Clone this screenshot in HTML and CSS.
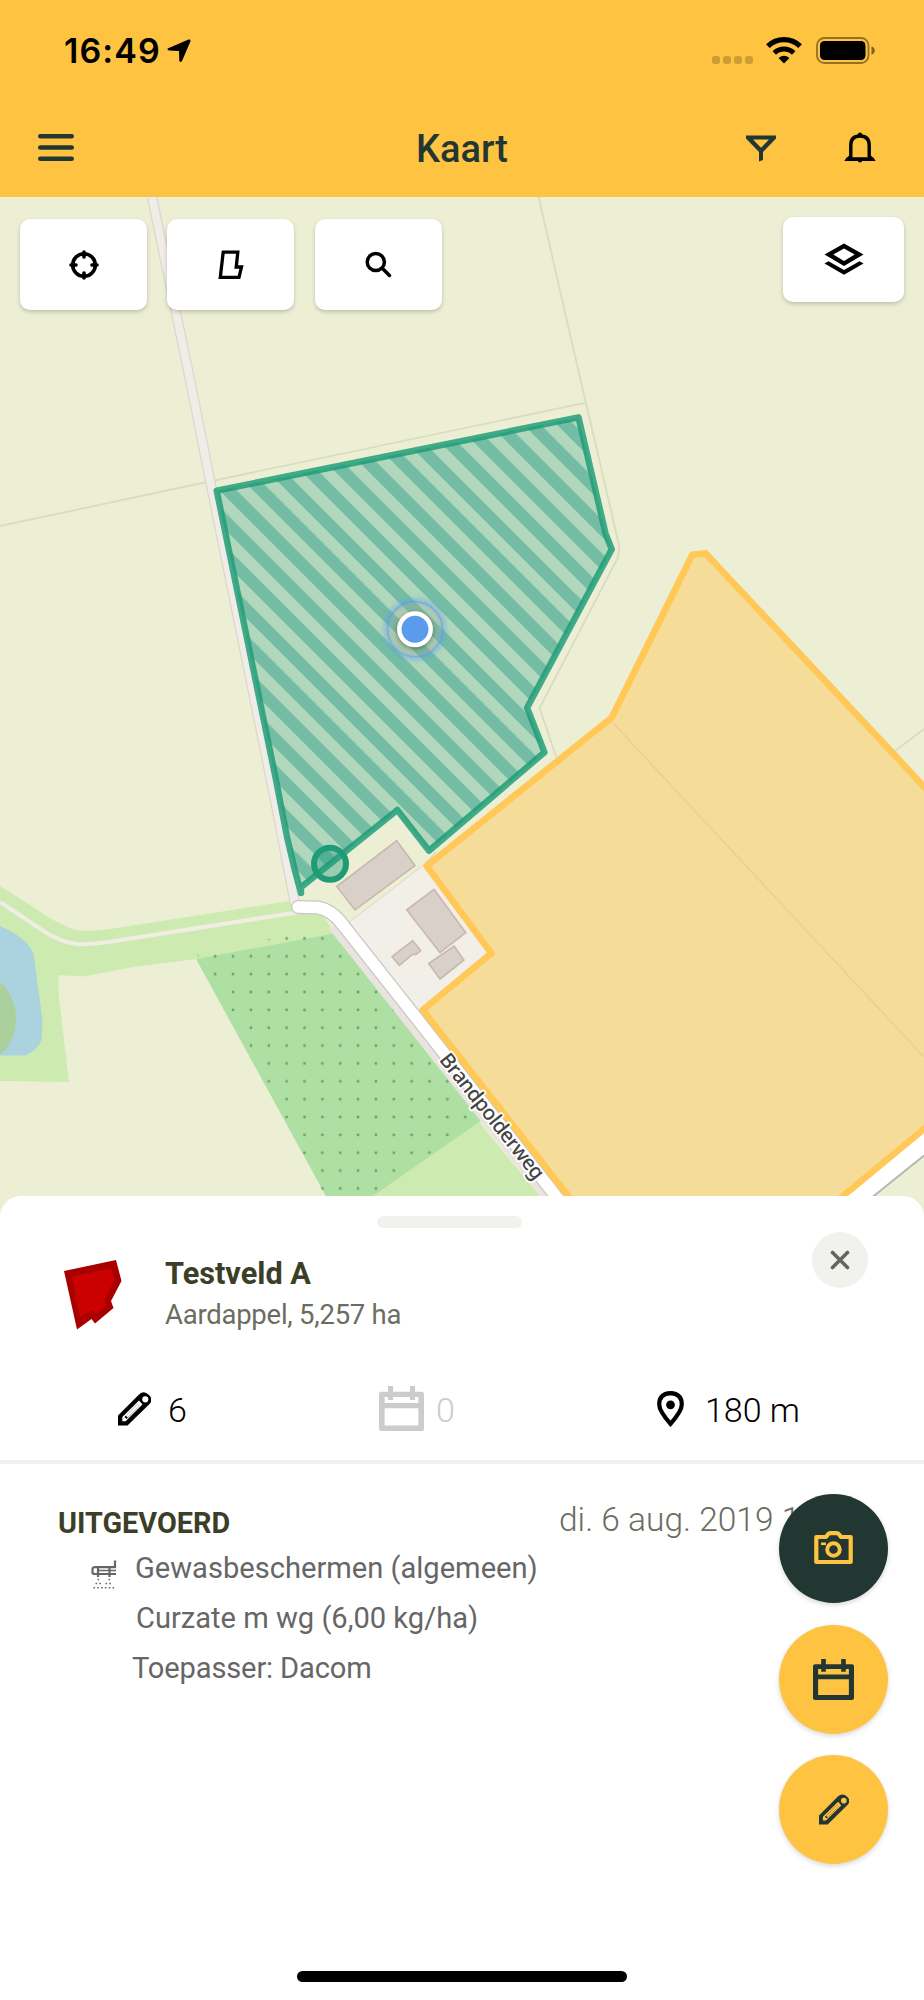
FILE: index.html
```html
<!DOCTYPE html>
<html lang="nl">
<head>
    <meta charset="UTF-8">
    <title>Kaart</title>
    <link rel="stylesheet" href="styles.css">
</head>
<body>
    <header>
        <div class="status-bar">
            <span class="time">16:49</span>
            <svg class="location" width="24" height="24" viewBox="0 0 24 24"><path d="M1.2 9.2 L21.5 .6 Q24 0 23.4 2.6 L15 22 Q13.2 24.4 12.3 21.5 L12 12 L2 11.4 Q-.8 10.6 1.2 9.2Z"/></svg>
            <span class="signal"><i></i><i></i><i></i><i></i></span>
            <svg class="wifi" width="36" height="27" viewBox="0 0 36 27">
                <path d="M1.9 9.2 A23 23 0 0 1 34.1 9.2" fill="none" stroke="#000" stroke-width="5.2"/>
                <path d="M8.3 16 A14 14 0 0 1 27.7 16" fill="none" stroke="#000" stroke-width="5"/>
                <path d="M12.6 21 Q18 16.6 23.4 21 L18 26.4Z"/>
            </svg>
            <svg width="60" height="28" viewBox="0 0 60 28">
                <rect x="1" y="1" width="51.5" height="25" rx="7.5" fill="none" stroke="#000" stroke-opacity=".42" stroke-width="1.8"/>
                <rect x="4" y="4" width="45.5" height="19" rx="4.5"/>
                <path d="M55.5 9.2 Q58.8 10.5 58.8 13.5 T55.5 17.8Z" fill-opacity=".5"/>
            </svg>
        </div>
        <nav>
            <svg class="menu" width="36" height="28" viewBox="0 0 36 28"><path d="M2.3 2.3H33.7M2.3 13.5H33.7M2.3 24.7H33.7"/></svg>
            <h1>Kaart</h1>
            <svg class="filter" width="30" height="27" viewBox="0 0 30 27"><path fill-rule="evenodd" d="M0 .5H30V3.5L17 17V25L13 26.5V17L0 3.5ZM7 4.5L15 12.7L23 4.5Z"/></svg>
            <svg class="bell" width="32" height="31" viewBox="0 0 32 31">
                <path d="M6.8 26V13.3Q6.8 4 16 4T25.2 13.3V24L28 27.2H4L6.8 24" fill="none" stroke="#000" stroke-width="3.4"/>
                <path d="M13.3 3.5Q14 .4 16 .4T18.7 3.5ZM13.6 28.5H18.4Q18 30.6 16 30.6T13.6 28.5ZM.8 28.8L2.5 25.6H29.5L31.2 28.8Z"/>
            </svg>
        </nav>
    </header>

    <main class="map">
        <svg class="map-canvas" width="924" height="1023" viewBox="0 197 924 1023">
            <defs>
                <pattern id="stripes" width="23.76" height="24" patternUnits="userSpaceOnUse" patternTransform="translate(0 237.3) rotate(-45)">
                    <rect width="23.76" height="24" fill="#b1d7bc"/>
                    <rect width="12.2" height="24" fill="#75bca5"/>
                </pattern>
                <pattern id="orchard" x="188.4" y="947.4" width="17.86" height="17.86" patternUnits="userSpaceOnUse">
                    <circle cx="8.93" cy="8.93" r="1.4" fill="#6f9f69"/>
                </pattern>
                <filter id="glow" x="-50%" y="-50%" width="200%" height="200%"><feGaussianBlur stdDeviation="2.4"/></filter>
            </defs>

            <!-- grass, water and orchard -->
            <path fill="#cdebb0" d="M0 886L30 905Q60 926 77 930Q90 932 110 929L200 915L290 901L320 912L335 933L197 959L133 967L84 976.500L58.500 975L58.500 993L62 1023L69 1082L0 1081Z"/>
            <path fill="#aad3df" d="M0 926C14 932 32 943 34 957L42.500 1021L41.500 1040Q38 1050 25 1055.500H0Z"/>
            <path fill="#abd09b" d="M0 982Q16 997 16 1019Q16 1041 0 1055Z"/>
            <path fill="none" stroke="#f0ede5" stroke-width="4.200" d="M0 902L45 932Q65 944 80 944.300Q93 944.300 115 941L200 927.600L300 912"/>
            <path fill="#cdebb0" d="M470 1110L555 1220H340Z"/>
            <path fill="#aee0a3" d="M196 959L333 933.500L482 1120L339 1220L196 959Z"/>
            <path fill="#cdebb0" d="M479 1122.500L373 1196L340 1220H560Z"/>
            <path fill="url(#orchard)" d="M196 952L310 932L334 933L480 1118L373 1194L325 1196Z"/>

            <!-- parcel borders -->
            <g fill="none" stroke="#d9dcc3" stroke-width="1.800">
                <path d="M0 526L207 482L586 402.700"/>
                <path d="M538.700 197L569 330L580.600 380L586 403L619.400 546.700L617.700 558L539.600 708L556.300 757"/>
                <path d="M895 751L924 729M350 922L423 866L436 852M705 550L900 757"/>
            </g>

            <!-- unpaved road -->
            <path fill="none" stroke="#dbd8cb" stroke-width="10.500" d="M152 197L190 380L211 485L277 810L295 904"/>
            <path fill="none" stroke="#f0ece7" stroke-width="8" d="M152 197L190 380L211 485L277 810L295 904"/>

            <!-- farmyard -->
            <path fill="#f2efe9" d="M423 866L491 953L418 1010L350 922Z"/>
            <g fill="#d9d0c9" stroke="#c9b8ae" stroke-width="1.600">
                <path d="M396.700 840.700L415 865.700L355 910L336.700 886.500Z"/>
                <path d="M434 889.300L465.700 932.700L440 952.700L406.700 910Z"/>
                <path d="M412.700 940.700L420.700 950.700L416 954.500L412.500 954.500L399.300 965.300L392 956.700Z"/>
                <path d="M454 946L464 960L440 979L428.700 963.500Z"/>
            </g>

            <!-- Brandpolderweg -->
            <path fill="none" stroke="#e9e4df" stroke-width="18" d="M336 923L560 1207"/>
            <path fill="none" stroke="#c9c7c4" stroke-width="14" stroke-linecap="round" d="M298 907L318 907.500Q332 910 343 925L418 1020L566 1209"/>
            <path fill="none" stroke="#fff" stroke-width="11.500" stroke-linecap="round" d="M298 907L318 907.500Q332 910 343 925L418 1020L566 1209"/>
            <path fill="#fff" d="M924 1128V1155L874 1196L844 1220H800Z"/>
            <path fill="none" stroke="#b5b5ae" stroke-width="1.800" d="M924 1155.500L844 1220"/>

            <!-- yellow field -->
            <path fill="#f5dd99" stroke="#ffc857" stroke-width="6.600" stroke-linejoin="round" d="M692.300 554.700L705.500 553.300L960 825V1098L924 1129L820 1215L700 1310L600 1236L568.300 1196L422.700 1010L491.300 953.300L426.700 866L611.800 717.500Z"/>
            <path fill="none" stroke="#e9d292" stroke-width="1.800" d="M613 723L924 1057"/>

            <!-- selected field -->
            <path fill="url(#stripes)" d="M216.700 490.700L578.500 417.300L605.500 533.300L611.800 549.300L527.100 707.700L544.500 752.300L429 850.700L397.300 810L301 887.300V893L294 865L276 780Z"/>
            <path fill="none" stroke="#1b9b75" stroke-opacity=".82" stroke-width="6.400" stroke-linejoin="round" stroke-linecap="round" d="M301 893L301 887.300L397.300 810L429 850.700L544.500 752.300L527.100 707.700L611.800 549.300L605.500 533.300L578.500 417.300L216.700 490.700L276 780L287 837L295 871L301 893"/>
            <circle cx="330" cy="863.700" r="16" fill="#1f9b77" fill-opacity=".4" stroke="#1f9b77" stroke-width="6"/>

            <!-- own position -->
            <circle cx="415" cy="629.300" r="28.500" fill="none" stroke="#5b9bed" stroke-width="4" filter="url(#glow)" opacity=".6"/>
            <circle cx="415" cy="629.300" r="27.500" fill="#b8a98a" fill-opacity=".2" stroke="#5b9bed" stroke-opacity=".5" stroke-width="1.500"/>
            <circle cx="415" cy="631" r="18.500" fill="#24483a" opacity=".5" filter="url(#glow)"/>
            <circle cx="415" cy="629.300" r="15.700" fill="#5b9bed" stroke="#fff" stroke-width="4.500"/>

            <text class="road-name" transform="translate(438.500 1060) rotate(51.500)" textLength="155">Brandpolderweg</text>
        </svg>

        <div class="map-tools">
            <button>
                <svg width="30" height="30" viewBox="0 0 30 30" fill="none" stroke="#000" stroke-width="3.6" stroke-linecap="round"><circle cx="15" cy="15" r="11.300"/><path d="M15 2V7M15 23V28M2 15H7M23 15H28"/></svg>
            </button>
            <button>
                <svg width="26" height="30" viewBox="0 0 26 30" fill="none" stroke="#000" stroke-width="3.300"><path d="M5.200 2.200H19.800L18.200 17H23.500L21 27.300H2.300Z"/></svg>
            </button>
            <button>
                <svg width="27" height="27" viewBox="0 0 27 27" fill="none" stroke="#000" stroke-width="3.500" stroke-linecap="round"><circle cx="10.800" cy="11" r="8.600"/><path d="M17.500 17.500L24.500 24.500"/></svg>
            </button>
            <button class="layers">
                <svg width="40" height="32" viewBox="0 0 40 32"><path fill-rule="evenodd" d="M20 .4L39.500 11.500L20 23L.500 11.500ZM20 5.500L9.300 11.500L20 17.900L30.700 11.500ZM.500 20.500L4.500 18.200L20 27L35.500 18.200L39.500 20.500L20 31.700Z"/></svg>
            </button>
        </div>
    </main>

    <section class="sheet">
        <div class="handle"></div>
        <div class="field">
            <svg width="58" height="70" viewBox="0 0 58 70"><path fill="#a80000" d="M0 11L52 0L57.500 21L47 41L49.500 48L31 63.500L27.500 59L13 69.500Z"/><path fill="#cb0000" d="M8 16.500L47.500 8.300L50.500 20L40.500 40.500L42.500 45.500L31.500 54.500L28 49.500L16 57.500Z"/></svg>
            <div class="field-text">
                <h2>Testveld A</h2>
                <p>Aardappel, 5,257 ha</p>
            </div>
            <button class="close">
                <svg width="20" height="20" viewBox="0 0 20 20"><path d="M2.500 2.500L17.500 17.500M17.500 2.500L2.500 17.500"/></svg>
            </button>
        </div>
        <div class="stats">
            <div class="stat">
                <svg width="33" height="34" viewBox="0 0 33 34"><path fill-rule="evenodd" d="M0 23.500L21 2.500Q26-2 31 3T30.500 13L9.500 33.500H0ZM4.300 25V29.200H7.600L24.500 12.500L21 8.500ZM27.300 4.200A3.100 3.100 0 1 0 27.300 10.400A3.100 3.100 0 1 0 27.300 4.200Z"/><path d="M7.500 26L20.500 13" stroke="#000" stroke-width="2.800"/><path d="M8.800 24.700L20.500 13" stroke="#fff" stroke-width="2.500"/></svg>
                <span>6</span>
            </div>
            <div class="stat empty">
                <svg width="45" height="45" viewBox="0 0 40 40"><path fill-rule="evenodd" d="M2 5H8V0H12.500V5H27.500V0H32V5H38Q40 5 40 7V38Q40 40 38 40H2Q0 40 0 38V7Q0 5 2 5ZM5 9.800V15H35V9.800H32V12.500H27.500V9.800H12.500V12.500H8V9.800ZM5 19.700V35H35V19.700Z"/></svg>
                <span>0</span>
            </div>
            <div class="stat">
                <svg width="27" height="36" viewBox="0 0 27 36"><path d="M13.500 2.200Q2.200 2.800 2.200 13.500Q2.200 20 13.500 32.800Q24.800 20 24.800 13.500Q24.800 2.800 13.500 2.200Z" fill="none" stroke="#000" stroke-width="4.200"/><circle cx="13.500" cy="13.800" r="4.400"/></svg>
                <span>180 m</span>
            </div>
        </div>

        <div class="activity">
            <div class="activity-head">
                <h3>UITGEVOERD</h3>
                <time>di. 6 aug. 2019 1</time>
            </div>
            <ul>
                <li>
                    <svg width="26" height="31" viewBox="0 0 26 31" fill="none" stroke="#666"><path stroke-width="2.200" d="M4 8.200H24V1.500M4 8.200Q1.500 8.200 1.500 10V13.500Q1.500 15 4 15H25M7 8V18M18.500 8V18"/><path stroke-width="1.500" d="M7 11.500H25"/><path stroke-width="1.600" stroke-dasharray="1.600 2.200" d="M6.500 20.500H9M17.500 20.500H20M4.500 24.500H11.500M14.500 24.500H22M2.500 28.800H24"/></svg>
                    Gewasbeschermen (algemeen)
                </li>
                <li>Curzate m wg (6,00 kg/ha)</li>
                <li class="applicator">Toepasser: Dacom</li>
            </ul>
        </div>

        <div class="actions">
            <button class="camera">
                <svg width="39" height="34" viewBox="0 0 39 34" fill="none" stroke="#ffc342"><path stroke-width="4.200" stroke-linejoin="round" d="M2.300 6H12L14.500 2.800Q15.500 2.200 16.500 2.200H22.500Q23.500 2.200 24.500 2.800L27 6H36.700V31H2.300Z"/><circle cx="19.500" cy="18.500" r="6.300" stroke-width="3.900"/><path stroke-width="2.600" d="M7 12.800H12"/></svg>
            </button>
            <button class="plan">
                <svg width="41" height="41" viewBox="0 0 40 40"><path fill-rule="evenodd" d="M2 5H8V0H12.500V5H27.500V0H32V5H38Q40 5 40 7V38Q40 40 38 40H2Q0 40 0 38V7Q0 5 2 5ZM5 9.800V15H35V9.800H32V12.500H27.500V9.800H12.500V12.500H8V9.800ZM5 19.700V35H35V19.700Z"/></svg>
            </button>
            <button>
                <svg width="30" height="31" viewBox="0 0 33 34"><path fill-rule="evenodd" d="M0 23.500L21 2.500Q26-2 31 3T30.500 13L9.500 33.500H0ZM4.300 25V29.200H7.600L24.500 12.500L21 8.500ZM27.300 4.200A3.100 3.100 0 1 0 27.300 10.400A3.100 3.100 0 1 0 27.300 4.200Z"/><path d="M7.500 26L20.500 13" stroke="#223732" stroke-width="2.800"/><path d="M8.800 24.700L20.500 13" stroke="#ffc342" stroke-width="2.500"/></svg>
            </button>
        </div>
        <div class="home-indicator"></div>
    </section>
</body>
</html>
```
FILE: styles.css
```css
* {
    box-sizing: border-box;
}
body {
    margin: 0;
    width: 924px;
    height: 2000px;
    overflow: hidden;
    font-family: Roboto, sans-serif;
    background: #fff;
    color: #000;
    display: flex;
    flex-direction: column;
}
svg {
    display: block;
    flex: none;
}
h1, h2, h3, p, ul {
    margin: 0;
    padding: 0;
}
button {
    border: none;
    padding: 0;
    display: flex;
    align-items: center;
    justify-content: center;
}
header {
    height: 197px;
    background: #ffc342;
}
.status-bar {
    height: 101px;
    padding: 0 48px 0 64px;
    display: flex;
    align-items: center;
}
.time {
    font: 600 34px/40px Inter, sans-serif;
    width: 103px;
    letter-spacing: 1.1px;
}
.signal {
    margin: 18px 13px 0 auto;
    display: flex;
    gap: 3px;
}
.signal i {
    width: 8px;
    height: 8px;
    border-radius: 3px;
    background: #cc9c35;
}
.wifi {
    margin-right: 14px;
}
nav {
    height: 94px;
    padding: 0 48px 0 38px;
    display: grid;
    grid-template-columns: 378px 1fr 30px 32px;
    align-items: center;
}
.menu path {
    stroke: #223732;
    stroke-width: 4.6;
    stroke-linecap: round;
}
h1 {
    font-size: 38px;
    font-weight: 500;
    line-height: 44px;
    padding-top: 2px;
    color: #223732;
}
.filter {
    fill: #223732;
    transform: translateX(-68px);
}
.bell {
    margin-bottom: 2px;
}
.map {
    position: relative;
    height: 999px;
    flex: none;
}
.map-canvas {
    position: absolute;
    top: 0;
    left: 0;
    background: #edefd5;
}
.road-name {
    font: 500 20.5px "Noto Sans", sans-serif;
    fill: #444;
    stroke: #fff;
    stroke-width: 3.5px;
    stroke-linejoin: round;
    paint-order: stroke;
}
.map-tools {
    position: relative;
    display: flex;
    gap: 20.3px;
    padding: 22px 20px 0;
}
.map-tools button {
    width: 127px;
    height: 91px;
    background: #fff;
    border-radius: 10px;
    box-shadow: 0 2px 4px rgba(0, 0, 0, 0.2);
}
.map-tools .layers {
    width: 121px;
    height: 85px;
    margin: -2px 0 0 auto;
    padding-bottom: 2px;
}
.sheet {
    position: relative;
    flex: 1;
    background: #fff;
    border-radius: 21px 21px 0 0;
}
.handle {
    width: 145px;
    height: 12px;
    margin-left: 377px;
    border-radius: 6px;
    background: #f1f2ee;
}
.sheet::before {
    content: "";
    display: block;
    height: 20px;
}
.field {
    height: 128px;
    padding: 32px 56px 0 64px;
    display: flex;
    align-items: flex-start;
}
.field-text {
    margin: -6px 0 0 43px;
    flex: 1;
}
h2 {
    font-size: 30.7px;
    line-height: 40px;
    color: #3b3f27;
}
.field p {
    font-size: 27.5px;
    line-height: 41px;
    letter-spacing: -0.25px;
    color: #6b6d60;
}
.close {
    width: 56px;
    height: 56px;
    margin-top: -28px;
    border-radius: 50%;
    background: #f1f2ee;
}
.close path {
    stroke: #66685b;
    stroke-width: 3.6;
    stroke-linecap: round;
}
.stats {
    height: 108px;
    padding: 1px 118px 0;
    display: flex;
    border-bottom: 4px solid #f1f2ee;
}
.stat {
    display: flex;
    align-items: center;
    font-size: 34px;
    font-weight: 300;
    width: 261px;
    gap: 17px;
}
.stat span {
    padding-top: 2px;
}
.stat.empty {
    width: 278px;
    gap: 12px;
    color: #ccc;
    fill: #ccc;
}
.stat:last-child {
    width: auto;
    gap: 21px;
}
.activity {
    padding: 34px 0 0 58px;
}
.activity-head {
    display: flex;
    height: 45px;
}
h3 {
    width: 501px;
    font-size: 28.8px;
    line-height: 50px;
    color: #3b3f27;
}
time {
    font-size: 33.5px;
    font-weight: 300;
    line-height: 44px;
    color: #6b6d60;
}
ul {
    list-style: none;
}
li {
    display: flex;
    font-size: 29.1px;
    line-height: 50px;
    height: 50px;
    padding-left: 78px;
    color: #666;
}
li svg {
    margin: 16px 18px 0 -45px;
}
.applicator {
    padding-left: 74px;
    letter-spacing: -0.15px;
}
.actions {
    position: absolute;
    right: 36px;
    top: 297.5px;
    display: flex;
    flex-direction: column;
}
.actions button {
    width: 109px;
    height: 109px;
    border-radius: 50%;
    background: #ffc342;
    fill: #223732;
    box-shadow: 0 2px 5px rgba(0, 0, 0, 0.16);
}
.actions .camera {
    background: #223732;
}
.actions .plan {
    margin: 22.5px 0 20.5px;
}
.home-indicator {
    position: absolute;
    left: 297px;
    bottom: 18px;
    width: 330px;
    height: 11px;
    border-radius: 6px;
    background: #000;
}
```
